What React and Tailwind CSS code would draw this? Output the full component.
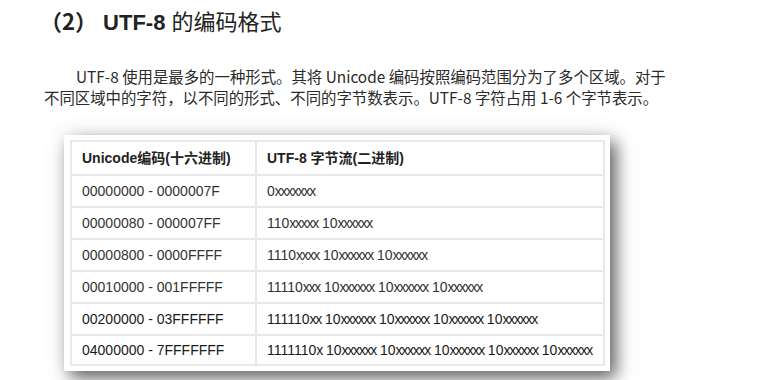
import React from "react";

const rows = [
  ["00000000 - 0000007F", "0xxxxxxx"],
  ["00000080 - 000007FF", "110xxxxx 10xxxxxx"],
  ["00000800 - 0000FFFF", "1110xxxx 10xxxxxx 10xxxxxx"],
  ["00010000 - 001FFFFF", "11110xxx 10xxxxxx 10xxxxxx 10xxxxxx"],
  ["00200000 - 03FFFFFF", "111110xx 10xxxxxx 10xxxxxx 10xxxxxx 10xxxxxx"],
  ["04000000 - 7FFFFFFF", "1111110x 10xxxxxx 10xxxxxx 10xxxxxx 10xxxxxx 10xxxxxx"],
];

function Bits({ s }) {
  const parts = s.split(/(x+)/);
  return (
    <span>
      {parts.map((p, i) =>
        p.startsWith("x") ? (
          <span key={i} className="tracking-[-1.25px]">
            {p}
          </span>
        ) : (
          <span key={i}>{p}</span>
        )
      )}
    </span>
  );
}

export default function App() {
  return (
    <div className="w-[780px] h-[380px] bg-white overflow-hidden text-[#222]">
      <div
        className="pl-[40px] pt-[5px] h-[30px] leading-[30px] text-[22px] whitespace-nowrap"
        style={{ fontFamily: '"Liberation Sans", "Noto Sans CJK SC", sans-serif' }}
      >
        <span className="font-bold" style={{ fontFamily: '"Noto Sans CJK SC", sans-serif' }}>（2）</span>
        <span className="font-bold"> UTF-8 </span>
        <span style={{ fontFamily: '"Noto Sans CJK SC", sans-serif' }}>的编码格式</span>
      </div>

      <div
        className="mt-[36px] pl-[44px] text-[15.4px] leading-[21px] text-[#2a2a2a] whitespace-nowrap"
        style={{ fontFamily: '"Noto Sans CJK SC", sans-serif' }}
      >
        <div className="pl-[32px]">
          UTF-8 使用是最多的一种形式。其将 Unicode 编码按照编码范围分为了多个区域。对于
        </div>
        <div>不同区域中的字符，以不同的形式、不同的字节数表示。UTF-8 字符占用 1-6 个字节表示。</div>
      </div>

      <div className="ml-[64px] mt-[27px] w-[546px] bg-white pl-[6px] pr-[5px] pt-[5px] pb-[5px] shadow-[6px_7px_16px_rgba(0,0,0,0.6),0_0_22px_rgba(0,0,0,0.08)]">
        <div
          className="border-2 border-[#e9e9e9] text-[14px] text-[#333]"
          style={{ fontFamily: '"Liberation Sans", "Noto Sans CJK SC", sans-serif' }}
        >
          <div className="flex h-[32px] items-center font-bold text-[#222]">
            <div className="w-[185px] pl-[10px] border-r-2 border-[#e9e9e9] h-full flex items-center">
              Unicode编码(十六进制)
            </div>
            <div className="pl-[10px]">UTF-8 字节流(二进制)</div>
          </div>
          {rows.map(([a, b], i) => (
            <div
              key={i}
              className={`flex ${i === 5 ? "h-[30px]" : "h-[32px]"} items-center border-t-2 border-[#e9e9e9] ${
                i >= 4 ? "text-[#1a1a1a]" : ""
              }`}
            >
              <div className="w-[185px] pl-[10px] border-r-2 border-[#e9e9e9] h-full flex items-center">
                {a}
              </div>
              <div className="pl-[10px] whitespace-nowrap">
                <Bits s={b} />
              </div>
            </div>
          ))}
        </div>
      </div>
    </div>
  );
}
